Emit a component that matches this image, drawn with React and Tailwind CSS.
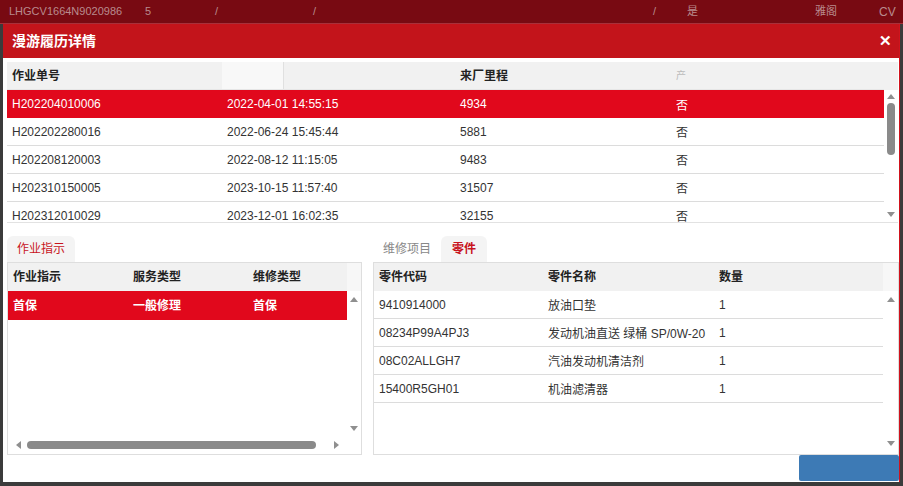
import React from "react";

const font = { fontFamily: '"Liberation Sans", "Noto Sans CJK SC", sans-serif' };

const records = [
  ["H202204010006", "2022-04-01 14:55:15", "4934", "否"],
  ["H202202280016", "2022-06-24 15:45:44", "5881", "否"],
  ["H202208120003", "2022-08-12 11:15:05", "9483", "否"],
  ["H202310150005", "2023-10-15 11:57:40", "31507", "否"],
  ["H202312010029", "2023-12-01 16:02:35", "32155", "否"],
];

const parts = [
  ["9410914000", "放油口垫", "1"],
  ["08234P99A4PJ3", "发动机油直送 绿桶 SP/0W-20", "1"],
  ["08C02ALLGH7", "汽油发动机清洁剂", "1"],
  ["15400R5GH01", "机油滤清器", "1"],
];

const Up = () => (
  <svg width="8" height="5" viewBox="0 0 8 5"><path d="M0 5 L4 0 L8 5 Z" fill="#8f8f8f" /></svg>
);
const Down = () => (
  <svg width="8" height="5" viewBox="0 0 8 5"><path d="M0 0 L4 5 L8 0 Z" fill="#8f8f8f" /></svg>
);

const App = () => {
  return (
    <div className="w-[903px] h-[486px] bg-[#3b3b3b] flex flex-col overflow-hidden text-[12px]" style={font}>
      <div className="h-[24px] shrink-0 bg-[#780a12] flex items-center text-[11px] text-[#b98a8e] border-b border-[#a8303a]">
        <span className="ml-[9px] w-[136px]">LHGCV1664N9020986</span>
        <span className="w-[70px]">5</span>
        <span className="w-[98px]">/</span>
        <span className="w-[340px]">/</span>
        <span className="w-[34px]">/</span>
        <span className="w-[128px]">是</span>
        <span className="w-[64px]">雅阁</span>
        <span className="text-[12px]">CV</span>
      </div>

      <div className="ml-[3px] w-[897px] h-[458px] bg-white flex flex-col border-r border-[#d0131d]">
        <div className="h-[34px] shrink-0 bg-[#c3141b] flex items-center justify-between px-[9px] text-white">
          <span className="text-[14px] font-bold">漫游履历详情</span>
          <span className="text-[15px] font-bold mr-[-2px]">✕</span>
        </div>

        <div className="mt-[4px] ml-[4px] w-[891px] h-[161px] flex border-b border-[#e2e2e2] overflow-hidden">
          <div className="flex-1 flex flex-col">
            <div className="h-[28px] shrink-0 bg-[#f1f1f1] flex items-center font-bold text-[#222] border-b border-[#e6e6e6]">
              <div className="w-[215px] pl-[5px]">作业单号</div>
              <div className="w-[62px] h-full bg-[#f8f8f8] border-r border-[#e0e0e0]"></div>
              <div className="w-[171px]"></div>
              <div className="w-[216px] pl-[5px]">来厂里程</div>
              <div className="pl-[5px] font-normal text-[#bbb] text-[10px]">产</div>
            </div>
            {records.map((r, i) => (
              <div
                key={r[0]}
                className={
                  "h-[28px] shrink-0 flex items-center " +
                  (i === 0 ? "bg-[#e1081c] text-white" : "text-[#333] border-b border-[#dcdcdc]")
                }
              >
                <div className="w-[215px] pl-[5px]">{r[0]}</div>
                <div className="w-[233px] pl-[5px]">{r[1]}</div>
                <div className="w-[216px] pl-[5px]">{r[2]}</div>
                <div className="pl-[5px] pt-[3px]">{r[3]}</div>
              </div>
            ))}
          </div>
          <div className="w-[14px] flex flex-col items-center">
            <div className="h-[28px] w-full bg-[#f1f1f1]"></div>
            <div className="mt-[4px]"><Up /></div>
            <div className="mt-[4px] w-[8px] h-[52px] rounded-full bg-[#8a8a8a]"></div>
            <div className="mt-auto mb-[5px]"><Down /></div>
          </div>
        </div>

        <div className="flex mt-[13px] ml-[4px] gap-[11px]">
          <div className="w-[355px] flex flex-col">
            <div className="flex h-[26px]">
              <div className="bg-[#f4f4f4] rounded-t-[6px] px-[10px] flex items-center text-[#c8141d]">作业指示</div>
            </div>
            <div className="h-[193px] border border-[#dedede] flex">
              <div className="flex-1 flex flex-col">
                <div className="h-[28px] bg-[#f1f1f1] flex items-center font-bold text-[#222]">
                  <div className="w-[120px] pl-[5px]">作业指示</div>
                  <div className="w-[120px] pl-[5px]">服务类型</div>
                  <div className="pl-[5px]">维修类型</div>
                </div>
                <div className="h-[29px] bg-[#e1081c] flex items-center font-bold text-white">
                  <div className="w-[120px] pl-[5px]">首保</div>
                  <div className="w-[120px] pl-[5px]">一般修理</div>
                  <div className="pl-[5px]">首保</div>
                </div>
                <div className="mt-auto h-[18px] flex items-center pl-[8px] pr-[4px]">
                  <svg width="5" height="8" viewBox="0 0 5 8"><path d="M5 0 L0 4 L5 8 Z" fill="#8f8f8f" /></svg>
                  <div className="ml-[6px] w-[289px] h-[8px] rounded-full bg-[#8a8a8a]"></div>
                  <div className="ml-auto mr-[4px]">
                    <svg width="5" height="8" viewBox="0 0 5 8"><path d="M0 0 L5 4 L0 8 Z" fill="#8f8f8f" /></svg>
                  </div>
                </div>
              </div>
              <div className="w-[14px] flex flex-col items-center">
                <div className="h-[28px] w-full bg-[#f7f7f7]"></div>
                <div className="mt-[6px]"><Up /></div>
                <div className="mt-auto mb-[23px]"><Down /></div>
              </div>
            </div>
          </div>

          <div className="w-[526px] flex flex-col">
            <div className="flex h-[26px] items-end">
              <div className="px-[10px] h-full flex items-center text-[#888]">维修项目</div>
              <div className="bg-[#f4f4f4] rounded-t-[6px] px-[11px] h-full flex items-center text-[#c8141d] font-bold">零件</div>
            </div>
            <div className="h-[193px] border border-[#dedede] flex">
              <div className="flex-1 flex flex-col">
                <div className="h-[28px] bg-[#f1f1f1] flex items-center font-bold text-[#222]">
                  <div className="w-[169px] pl-[5px]">零件代码</div>
                  <div className="w-[171px] pl-[5px]">零件名称</div>
                  <div className="pl-[5px]">数量</div>
                </div>
                {parts.map((p) => (
                  <div key={p[0]} className="h-[28px] flex items-center text-[#333] border-b border-[#dcdcdc]">
                    <div className="w-[169px] pl-[5px]">{p[0]}</div>
                    <div className="w-[171px] pl-[5px] pt-[3px] whitespace-nowrap">{p[1]}</div>
                    <div className="pl-[5px]">{p[2]}</div>
                  </div>
                ))}
              </div>
              <div className="w-[15px] flex flex-col items-center">
                <div className="h-[28px] w-full bg-[#f7f7f7]"></div>
                <div className="mt-[6px]"><Up /></div>
                <div className="mt-auto mb-[8px]"><Down /></div>
              </div>
            </div>
          </div>
        </div>

        <div className="flex justify-end">
          <div className="w-[100px] h-[26px] bg-[#3d7ab5] rounded-[2px]"></div>
        </div>
      </div>
    </div>
  );
};

export default App;
